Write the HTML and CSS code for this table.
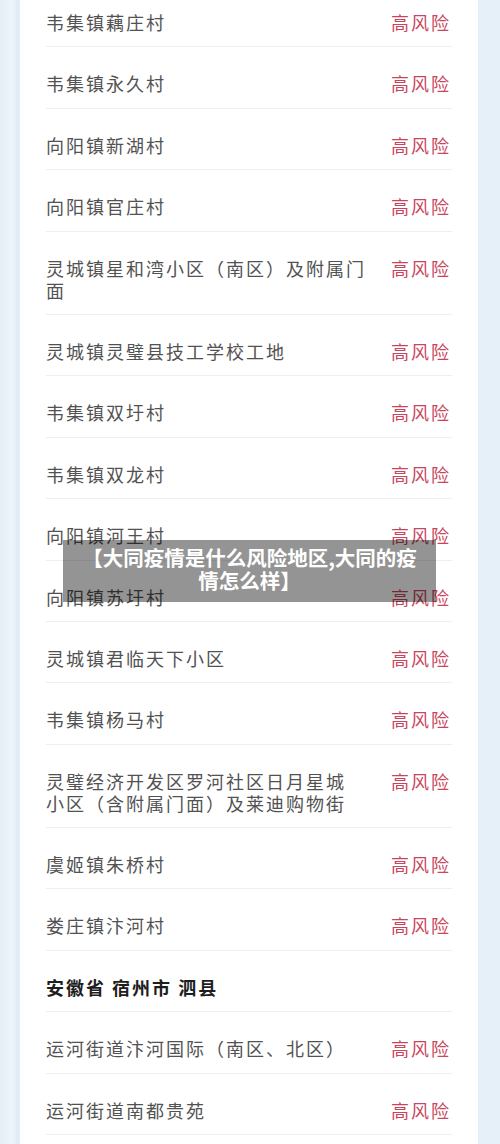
FILE: index.html
```html
<!DOCTYPE html>
<html lang="zh-CN">
<head>
  <meta charset="UTF-8">
  <title>大同疫情风险地区</title>
  <meta name="viewport" content="width=device-width, initial-scale=1.0">
  <link rel="stylesheet" href="styles.css">
</head>
<body>

  <div class="page">
    <div class="card">
      <div class="list">
        <div class="row"><span class="name">韦集镇藕庄村</span><span class="risk">高风险</span></div>
        <div class="row"><span class="name">韦集镇永久村</span><span class="risk">高风险</span></div>
        <div class="row"><span class="name">向阳镇新湖村</span><span class="risk">高风险</span></div>
        <div class="row"><span class="name">向阳镇官庄村</span><span class="risk">高风险</span></div>
        <div class="row"><span class="name">灵城镇星和湾小区（南区）及附属门<br>面</span><span class="risk">高风险</span></div>
        <div class="row"><span class="name">灵城镇灵璧县技工学校工地</span><span class="risk">高风险</span></div>
        <div class="row"><span class="name">韦集镇双圩村</span><span class="risk">高风险</span></div>
        <div class="row"><span class="name">韦集镇双龙村</span><span class="risk">高风险</span></div>
        <div class="row"><span class="name">向阳镇河王村</span><span class="risk">高风险</span></div>
        <div class="row"><span class="name">向阳镇苏圩村</span><span class="risk">高风险</span></div>
        <div class="row"><span class="name">灵城镇君临天下小区</span><span class="risk">高风险</span></div>
        <div class="row"><span class="name">韦集镇杨马村</span><span class="risk">高风险</span></div>
        <div class="row"><span class="name">灵璧经济开发区罗河社区日月星城<br>小区（含附属门面）及莱迪购物街</span><span class="risk">高风险</span></div>
        <div class="row"><span class="name">虞姬镇朱桥村</span><span class="risk">高风险</span></div>
        <div class="row"><span class="name">娄庄镇汴河村</span><span class="risk">高风险</span></div>
        <div class="row region"><span class="name">安徽省 宿州市 泗县</span></div>
        <div class="row"><span class="name">运河街道汴河国际（南区、北区）</span><span class="risk">高风险</span></div>
        <div class="row"><span class="name">运河街道南都贵苑</span><span class="risk">高风险</span></div>
      </div>
    </div>

    <div class="caption">【大同疫情是什么风险地区,大同的疫<br>情怎么样】</div>
  </div>

</body>
</html>
```

FILE: styles.css
```css
html, body {
  height: 100%;
  overflow: hidden;
}

body {
  margin: 0;
  padding: 0;
  background: linear-gradient(to right, #e4eef7 0, #eef5fb 12px, #dfeaf5 18px, #e6f0f9 20px);
  font-family: "Noto Sans CJK SC", "Noto Sans", sans-serif;
}

.page {
  position: relative;
  padding: 0 22px 0 20px;
  height: 100%;
}

.card {
  background-color: #fff;
  padding: 0 26px;
  height: 100%;
  overflow: hidden;
}

.list {
  margin-top: -14px;
}

.row {
  display: flex;
  justify-content: space-between;
  align-items: flex-start;
  padding: 25px 0 13.4px;
  border-bottom: 1px solid #efefef;
  font-size: 18px;
  line-height: 22px;
  letter-spacing: 2px;
}

.name {
  color: #525252;
}

.risk {
  color: #c8465d;
  margin-right: 1px;
  white-space: nowrap;
}

.region .name {
  color: #1e1e1e;
  font-weight: bold;
}

.caption {
  position: absolute;
  top: 540px;
  left: 63px;
  width: 373px;
  height: 62px;
  box-sizing: border-box;
  padding-top: 6px;
  background-color: rgba(0, 0, 0, 0.42);
  color: #fff;
  font-size: 20.5px;
  font-weight: bold;
  line-height: 23px;
  text-align: center;
  white-space: nowrap;
}
```
